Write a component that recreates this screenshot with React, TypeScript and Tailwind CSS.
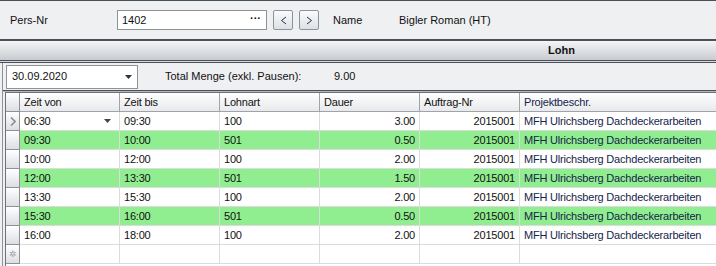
import React from "react";

const rows = [
  { von: "06:30", bis: "09:30", art: "100", dauer: "3.00", green: false, current: true },
  { von: "09:30", bis: "10:00", art: "501", dauer: "0.50", green: true },
  { von: "10:00", bis: "12:00", art: "100", dauer: "2.00", green: false },
  { von: "12:00", bis: "13:30", art: "501", dauer: "1.50", green: true },
  { von: "13:30", bis: "15:30", art: "100", dauer: "2.00", green: false },
  { von: "15:30", bis: "16:00", art: "501", dauer: "0.50", green: true },
  { von: "16:00", bis: "18:00", art: "100", dauer: "2.00", green: false },
];

const Indicator = ({ children }: { children?: React.ReactNode }) => (
  <div className="w-[14px] shrink-0 h-full border-r border-b border-[#8e9297] bg-gradient-to-b from-[#ffffff] to-[#dcdee2] flex items-center justify-center">
    {children}
  </div>
);

export default function App() {
  return (
    <div
      className="w-[716px] h-[266px] bg-[#eff0f2] overflow-hidden text-[11px] text-[#111]"
      style={{ fontFamily: '"Liberation Sans", Arial, sans-serif' }}
    >
      {/* top panel */}
      <div className="h-[41px] border-t border-b-2 border-[#4b5058] flex items-center">
        <div className="w-[117px] shrink-0 pl-[10px]">Pers-Nr</div>
        <div className="w-[150px] shrink-0 h-[20px] bg-white border border-[#8f9398] flex items-center pl-[4px] pr-[5px] justify-between">
          <span>1402</span>
          <span className="font-bold leading-none mb-[3px]">···</span>
        </div>
        <div className="ml-[6px] w-[20px] h-[20px] border border-[#8e9399] rounded-[2px] bg-gradient-to-b from-[#fbfbfc] to-[#dde0e4] flex items-center justify-center">
          <svg width="7" height="9" viewBox="0 0 7 9"><path d="M6 1 L1.5 4.5 L6 8" fill="none" stroke="#1d2b4f" strokeWidth="1" /></svg>
        </div>
        <div className="ml-[6px] w-[20px] h-[20px] border border-[#8e9399] rounded-[2px] bg-gradient-to-b from-[#fbfbfc] to-[#dde0e4] flex items-center justify-center">
          <svg width="7" height="9" viewBox="0 0 7 9"><path d="M1 1 L5.5 4.5 L1 8" fill="none" stroke="#1d2b4f" strokeWidth="1" /></svg>
        </div>
        <div className="ml-[14px] w-[66px] shrink-0">Name</div>
        <div>Bigler Roman (HT)</div>
      </div>

      {/* section header */}
      <div className="h-[19px] bg-gradient-to-b from-[#f4f5f7] to-[#c8cbd0] flex items-center pl-[548px] font-bold">
        Lohn
      </div>
      <div className="h-[3px] border-t border-b border-[#4b5058] bg-[#d8dadd]" />

      {/* group */}
      <div className="ml-[2px] border-l border-[#8e9297] h-[203px] flex flex-col">
        <div className="h-[28px] flex items-center border-b border-[#4b5058]">
          <div className="ml-[3px] w-[132px] h-[24px] bg-white border border-[#8f9398] flex items-center justify-between pl-[5px] pr-[5px]">
            <span>30.09.2020</span>
            <svg width="7" height="4" viewBox="0 0 7 4"><path d="M0 0 H7 L3.5 4 Z" fill="#333" /></svg>
          </div>
          <div className="ml-[27px] w-[169px]">Total Menge (exkl. Pausen):</div>
          <div>9.00</div>
        </div>
        <div className="h-[1px] bg-[#b5b8bd]" />

        {/* grid */}
        <div className="ml-[2px] border-l border-t border-[#6d7177] bg-white flex-1 flex flex-col tracking-[-0.2px]">
          {/* header */}
          <div className="h-[19px] flex bg-gradient-to-b from-[#ffffff] to-[#e6e8eb]">
            <Indicator />
            {["Zeit von", "Zeit bis", "Lohnart", "Dauer", "Auftrag-Nr"].map((h) => (
              <div key={h} className="w-[100px] shrink-0 border-r border-b border-[#a0a4a9] pl-[4px] flex items-center">
                {h}
              </div>
            ))}
            <div className="flex-1 border-b border-[#a0a4a9] pl-[4px] flex items-center text-[#16244a]">Projektbeschr.</div>
          </div>
          {rows.map((r, i) => {
            const bg = r.green ? "bg-[#90ee90]" : "bg-white";
            return (
              <div key={i} className={`h-[19px] flex ${bg}`}>
                <Indicator>
                  {r.current && (
                    <svg width="6" height="9" viewBox="0 0 6 9"><path d="M1 0.5 L5 4.5 L1 8.5" fill="none" stroke="#8a8d92" strokeWidth="1.6" /></svg>
                  )}
                </Indicator>
                <div className="w-[100px] shrink-0 border-r border-b border-[#dcdcdc] pl-[4px] pr-[8px] flex items-center justify-between">
                  <span>{r.von}</span>
                  {r.current && (
                    <svg width="7" height="4" viewBox="0 0 7 4"><path d="M0 0 H7 L3.5 4 Z" fill="#444" /></svg>
                  )}
                </div>
                <div className="w-[100px] shrink-0 border-r border-b border-[#dcdcdc] pl-[4px] flex items-center">{r.bis}</div>
                <div className="w-[100px] shrink-0 border-r border-b border-[#dcdcdc] pl-[4px] flex items-center">{r.art}</div>
                <div className="w-[100px] shrink-0 border-r border-b border-[#dcdcdc] pr-[4px] flex items-center justify-end">{r.dauer}</div>
                <div className="w-[100px] shrink-0 border-r border-b border-[#dcdcdc] pr-[4px] flex items-center justify-end">2015001</div>
                <div className="flex-1 border-b border-[#dcdcdc] pl-[4px] flex items-center text-[#16244a]">MFH Ulrichsberg Dachdeckerarbeiten</div>
              </div>
            );
          })}
          {/* new row */}
          <div className="h-[19px] flex bg-white">
            <Indicator>
              <span className="text-[#9a9da2] text-[9px] leading-none">✲</span>
            </Indicator>
            {[0, 1, 2, 3, 4].map((k) => (
              <div key={k} className="w-[100px] shrink-0 border-r border-b border-[#dcdcdc]" />
            ))}
            <div className="flex-1 border-b border-[#dcdcdc]" />
          </div>
        </div>
      </div>
    </div>
  );
}
